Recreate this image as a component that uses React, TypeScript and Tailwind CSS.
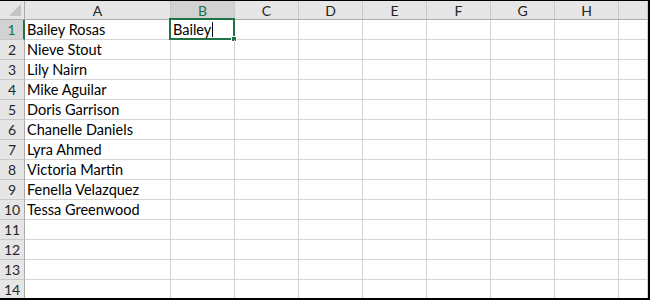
const columns = ['A', 'B', 'C', 'D', 'E', 'F', 'G', 'H', ''];

const names = [
    'Bailey Rosas',
    'Nieve Stout',
    'Lily Nairn',
    'Mike Aguilar',
    'Doris Garrison',
    'Chanelle Daniels',
    'Lyra Ahmed',
    'Victoria Martin',
    'Fenella Velazquez',
    'Tessa Greenwood',
    '',
    '',
    '',
    '',
];

const font = { fontFamily: '"Lato", "Liberation Sans", sans-serif' };

const Sheet = () => {
    return (
        <div className="w-[650px] h-[300px] bg-black pt-px pr-[2px] pb-[2px] overflow-hidden" style={font}>
            <div className="w-full h-full bg-white overflow-hidden">
                <div className="grid grid-cols-[25px_146px_repeat(7,64px)_1fr] grid-rows-[19px] auto-rows-[20px]">
                    {/* corner */}
                    <div className="relative bg-[#e6e6e6] border-r border-b border-[#ababab]">
                        <div className="absolute right-[3px] bottom-[3px] w-0 h-0 border-l-[12px] border-l-transparent border-b-[12px] border-b-[#c4c4c4]"></div>
                    </div>
                    {columns.map((c) => (
                        <div
                            key={'h' + c}
                            className={
                                'flex items-center justify-center text-[14px] border-b border-r border-b-[#ababab] border-r-[#c8c8c8] ' +
                                (c === 'B' ? 'bg-[#d2d2d2] text-[#217346]' : 'bg-[#e6e6e6] text-[#262626]')
                            }
                        >
                            {c}
                        </div>
                    ))}
                    {names.map((name, i) => (
                        <Row key={i} index={i + 1} name={name} />
                    ))}
                </div>
            </div>
        </div>
    );
};

const Row = ({ index, name }: { index: number; name: string }) => {
    const selected = index === 1;
    return (
        <>
            <div
                className={
                    'flex items-center justify-center text-[14px] border-b border-b-[#c8c8c8] ' +
                    (selected
                        ? 'bg-[#d2d2d2] text-[#217346] border-r-2 border-r-[#217346]'
                        : 'bg-[#e6e6e6] text-[#262626] border-r border-r-[#ababab]')
                }
            >
                {index}
            </div>
            <div className="flex items-center pl-[2px] text-[14.5px] text-black border-r border-b border-[#d4d4d4] whitespace-nowrap">
                {name}
            </div>
            <div className="relative flex items-center pl-[2px] text-[14.5px] text-black border-r border-b border-[#d4d4d4]">
                {selected && (
                    <>
                        <span>Bailey</span>
                        <span className="w-px h-[15px] bg-black ml-px"></span>
                        <div className="absolute -left-[2px] -top-[2px] -right-px -bottom-px border-2 border-[#217346]"></div>
                        <div className="absolute -right-[3px] -bottom-[3px] w-[6px] h-[6px] bg-[#217346] border border-white"></div>
                    </>
                )}
            </div>
            {columns.slice(2).map((c) => (
                <div key={c} className="border-r border-b border-[#d4d4d4]"></div>
            ))}
        </>
    );
};

export default function App() {
    return <Sheet />;
}
